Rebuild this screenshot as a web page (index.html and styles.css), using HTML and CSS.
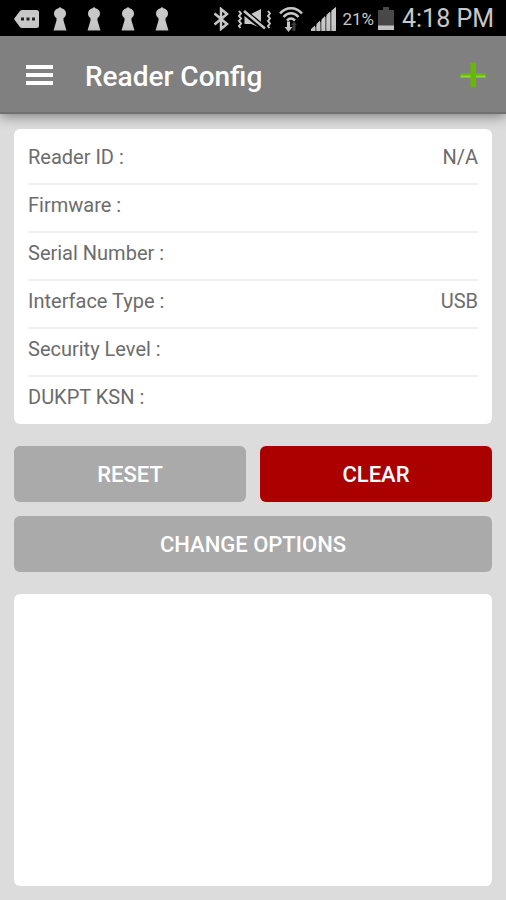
FILE: index.html
```html
<!DOCTYPE html>
<html lang="en">
<head>
<meta charset="utf-8">
<meta name="viewport" content="width=device-width, initial-scale=1">
<title>Reader Config</title>
<link rel="stylesheet" href="styles.css">
</head>
<body>
<svg width="0" height="0" class="defs" aria-hidden="true">
  <symbol id="keyhole" viewBox="0 0 14 24">
    <path d="M7 0 8.500 1.200C11.500 2 13 4 13 6.500c0 2-1 3.500-2.500 4.500v2.500L13.500 23.500H.5L3.500 13.500V11C2 10 1 8.500 1 6.500 1 4 2.500 2 5.500 1.200z"/>
  </symbol>
</svg>
<div class="status">
  <div class="notices">
    <svg width="25" height="18" viewBox="0 0 25 18" aria-hidden="true">
      <path d="M8 0h14.500Q25 0 25 2.500v13Q25 18 22.500 18H8Q6.500 18 5.500 16.500L0 9 5.500 1.500Q6.500 0 8 0z"/>
      <path class="ink" d="M7 7.500h3v3H7zM12.500 7.500h3v3h-3zM18 7.500h3v3h-3z"/>
    </svg>
    <svg width="14" height="24" aria-hidden="true"><use href="#keyhole"/></svg>
    <svg width="14" height="24" aria-hidden="true"><use href="#keyhole"/></svg>
    <svg width="14" height="24" aria-hidden="true"><use href="#keyhole"/></svg>
    <svg width="14" height="24" aria-hidden="true"><use href="#keyhole"/></svg>
  </div>
  <div class="system">
    <svg width="16" height="24" viewBox="0 0 16 24" aria-hidden="true">
      <path class="line" d="M1.500 6.500 14 17 8 22V2l6 5L1.500 17.500"/>
    </svg>
    <svg width="34" height="24" viewBox="0 0 34 24" aria-hidden="true">
      <path d="M7.500 7h6.500L24 2v19l-10-4H7.500z"/>
      <path class="cut" d="M5 3 28 22"/>
      <path class="line" d="M7 4 28 21.500"/>
      <path class="thin" d="M2 4 4 6.500 2 9l2 2.500L2 14l2 2.500L2 19l1.500 2M31 4l2 2.500L31 9l2 2.500L31 14l2 2.500L31 19l1.500 2"/>
    </svg>
    <svg width="24" height="26" viewBox="0 0 24 26" aria-hidden="true">
      <path class="line" d="M1 7.500C7 .5 17 .5 23 7.500M4.500 11C9 6 15 6 19.500 11M8 14.500c2.500-2.500 5.500-2.500 8 0"/>
      <path d="M8 15.500h3V21h2.500L9.500 26l-4-5H8z"/>
      <path class="dim" d="M13.500 25v-6H12l3-3.500 3 3.500h-1.500v6z"/>
    </svg>
    <svg class="signal" width="25" height="24" viewBox="0 0 25 24" aria-hidden="true">
      <path class="shade" d="M0 24 25 0v24z"/>
      <path d="M0 24v-2l4-3.500V24zM5.500 24v-7l3.500-3.500V24zM10.500 24V12.500L14 9v15zM15.500 24V8L19 4.500V24zM20.500 24V3.500L25 0v24z"/>
    </svg>
    <span class="percent">21%</span>
    <svg width="16" height="23" viewBox="0 0 16 23" aria-hidden="true">
      <path class="shell" d="M5 0h6v3h5v20H0V3h5z"/>
      <path d="M0 18.500h16V23H0z"/>
    </svg>
    <span class="clock">4:18 PM</span>
  </div>
</div>
<header class="bar">
  <button class="tool" type="button" aria-label="Menu">
    <svg width="28" height="28" viewBox="0 0 28 28" aria-hidden="true"><path d="M1 4h27v4H1zM1 12h27v4H1zM1 20h27v4H1z"/></svg>
  </button>
  <h1>Reader Config</h1>
  <button class="tool" type="button" aria-label="Add">
    <svg width="28" height="28" viewBox="0 0 28 28" aria-hidden="true"><path class="plus" d="M11.500 1.500h5.500v10.500h9.500v4.500H17v10h-5.500v-10H1.500V12h10z"/><path class="shine" d="M1.500 14.500h10v2h-10zM17 14.500h9.500v2H17z"/></svg>
  </button>
</header>
<main>
  <dl class="card">
    <div><dt>Reader ID :</dt><dd>N/A</dd></div>
    <div><dt>Firmware :</dt><dd></dd></div>
    <div><dt>Serial Number :</dt><dd></dd></div>
    <div><dt>Interface Type :</dt><dd>USB</dd></div>
    <div><dt>Security Level :</dt><dd></dd></div>
    <div><dt>DUKPT KSN :</dt><dd></dd></div>
  </dl>
  <div class="actions">
    <button type="button">RESET</button>
    <button type="button" class="danger">CLEAR</button>
    <button type="button" class="wide">CHANGE OPTIONS</button>
  </div>
  <section class="output" aria-live="polite"></section>
</main>
</body>
</html>
```
FILE: styles.css
```css
* {
  box-sizing: border-box;
}

body {
  margin: 0;
  min-height: 100vh;
  display: flex;
  flex-direction: column;
  background: #dcdcdc;
  font-family: Roboto, "Liberation Sans", sans-serif;
}

.defs {
  position: absolute;
}

.status {
  display: flex;
  justify-content: space-between;
  height: 36px;
  padding: 1px 12px 0 14px;
  background: #000;
  color: #c8c8c8;
  fill: #c8c8c8;
}

.notices,
.system {
  display: flex;
  align-items: center;
}

.notices {
  gap: 20px;
}

.notices svg:first-child {
  margin-right: -6px;
}

.system {
  gap: 8px;
}

.ink {
  fill: #222;
}

.line,
.thin,
.cut {
  fill: none;
  stroke: #c8c8c8;
  stroke-width: 2.5;
}

.thin {
  stroke-width: 2;
}

.cut {
  stroke: #000;
  stroke-width: 6;
}

.dim {
  fill: #3c3c3c;
}

.shell {
  fill: #484848;
}

.shade {
  fill: #666;
}

.signal {
  margin-right: -2px;
}

.percent {
  font-size: 17px;
  margin-right: -4px;
}

.clock {
  font-size: 25px;
  line-height: 32px;
}

.bar {
  position: relative;
  display: flex;
  align-items: center;
  height: 78px;
  padding: 2px 19px 0 25px;
  background: #808080;
  border-bottom: 2px solid #707070;
  box-shadow: 0 2px 12px rgba(0, 0, 0, 0.45);
}

.bar h1 {
  flex: 1;
  margin: 0 0 0 32px;
  padding-top: 4px;
  color: #fff;
  font-size: 28px;
  line-height: 36px;
  font-weight: 500;
}

.tool {
  display: flex;
  padding: 0;
  border: 0;
  background: none;
  fill: #fff;
}

.plus {
  fill: #66b800;
}

.shine {
  fill: #8fd63f;
}

main {
  flex: 1;
  display: flex;
  flex-direction: column;
  gap: 22px;
  padding: 15px 14px 14px;
}

.card,
.output {
  margin: 0;
  border-radius: 6px;
  background: #fff;
}

.card {
  padding: 8px 14px 0;
  color: #6c6c6c;
  font-size: 20px;
  line-height: 24px;
}

.card div {
  display: flex;
  justify-content: space-between;
  height: 48px;
  padding-top: 8px;
  border-bottom: 2px solid #f0f0f0;
}

.card div:last-child {
  height: 47px;
  border-bottom: 0;
}

.card dd {
  margin: 0;
}

.actions {
  display: grid;
  grid-template-columns: 1fr 1fr;
  gap: 14px;
}

.actions button {
  height: 56px;
  padding: 2px 0 0;
  border: 0;
  border-radius: 6px;
  background: #aaa;
  color: #fff;
  font: 500 22px/28px Roboto, "Liberation Sans", sans-serif;
}

.actions .danger {
  background: #a00;
}

.actions .wide {
  grid-column: 1 / -1;
}

.output {
  flex: 1;
}
```
